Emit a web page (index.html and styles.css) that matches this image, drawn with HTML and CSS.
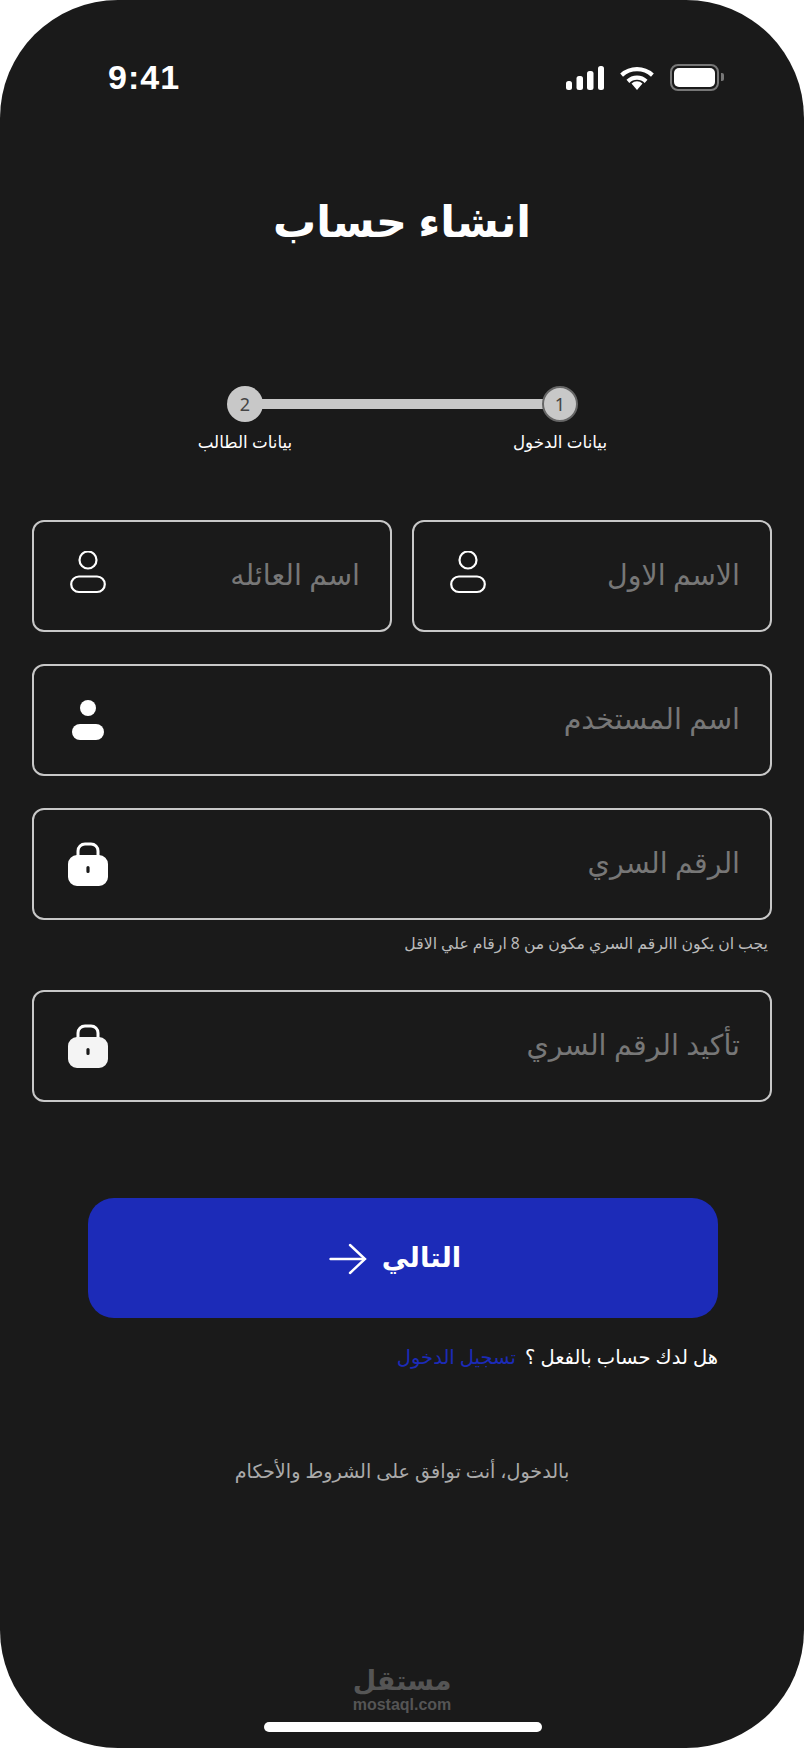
FILE: index.html
```html
<!DOCTYPE html>
<html lang="ar" dir="rtl">
<head>
  <meta charset="UTF-8" />
  <meta name="viewport" content="width=device-width, initial-scale=1.0"/>
  <title>انشاء حساب</title>
  <link rel="stylesheet" href="styles.css">
</head>
<body>
  <div class="phone">
    <div class="status-bar" dir="ltr">
      <span class="time">9:41</span>
      <div class="status-icons">
        <svg class="signal" width="38" height="24" viewBox="0 0 38 24"><rect x="0" y="15" width="6" height="9" rx="2.5"/><rect x="10.500" y="10" width="6.500" height="14" rx="2.500"/><rect x="21" y="5" width="6.500" height="19" rx="2.500"/><rect x="32" y="0" width="6" height="24" rx="2.500"/></svg>
        <svg class="wifi" width="34" height="24" viewBox="0 0 34 24"><path d="M17 24l-5.500-6.500a8 8 0 0 1 11 0z"/><path d="M17 9.500a15 15 0 0 1 10.500 4.300l-2.800 3.200a11 11 0 0 0-15.400 0l-2.800-3.200A15 15 0 0 1 17 9.500z"/><path d="M17 1a25 25 0 0 1 16.800 6.500l-2.800 3.200a21 21 0 0 0-28 0L.200 7.500A25 25 0 0 1 17 1z"/></svg>
        <div class="battery"><span class="battery-level"></span></div>
        <span class="battery-nub"></span>
      </div>
    </div>

    <h1 class="title">انشاء حساب</h1>

    <div class="stepper">
      <div class="step">
        <span class="step-num step-num-active">1</span>
        <span class="step-label">بيانات الدخول</span>
      </div>
      <div class="step-line"></div>
      <div class="step">
        <span class="step-num">2</span>
        <span class="step-label">بيانات الطالب</span>
      </div>
    </div>

    <form class="form">
      <div class="row-two">
        <label class="field">
          <span class="placeholder">الاسم الاول</span>
          <svg class="icon icon-outline" width="40" height="44" viewBox="0 0 40 44" fill="none" stroke="#fff" stroke-width="2.200"><circle cx="20" cy="9" r="8.500"/><rect x="3.200" y="25.500" width="33.600" height="15.500" rx="7.750"/></svg>
        </label>
        <label class="field">
          <span class="placeholder">اسم العائله</span>
          <svg class="icon icon-outline" width="40" height="44" viewBox="0 0 40 44" fill="none" stroke="#fff" stroke-width="2.200"><circle cx="20" cy="9" r="8.500"/><rect x="3.200" y="25.500" width="33.600" height="15.500" rx="7.750"/></svg>
        </label>
      </div>

      <label class="field">
        <span class="placeholder">اسم المستخدم</span>
        <svg class="icon" width="40" height="40" viewBox="0 0 40 40" fill="#fff"><circle cx="20" cy="8" r="8"/><rect x="4" y="24" width="32" height="16" rx="8"/></svg>
      </label>

      <div class="field-group">
        <label class="field">
          <span class="placeholder">الرقم السري</span>
          <svg class="icon" width="40" height="44" viewBox="0 0 40 44"><path d="M10 16V9a7 7 0 0 1 7-7h6a7 7 0 0 1 7 7v7" fill="none" stroke="#fff" stroke-width="3"/><path fill="#fff" fill-rule="evenodd" d="M9 13h22a9 9 0 0 1 9 9v13a9 9 0 0 1-9 9H9a9 9 0 0 1-9-9V22a9 9 0 0 1 9-9zm11 11a1.600 1.600 0 0 0-1.600 1.600v3.800a1.600 1.600 0 0 0 3.200 0v-3.800A1.600 1.600 0 0 0 20 24z"/></svg>
        </label>
        <p class="hint">يجب ان يكون االرقم السري مكون من 8 ارقام علي الاقل</p>
      </div>

      <label class="field">
        <span class="placeholder">تأكيد الرقم السري</span>
        <svg class="icon" width="40" height="44" viewBox="0 0 40 44"><path d="M10 16V9a7 7 0 0 1 7-7h6a7 7 0 0 1 7 7v7" fill="none" stroke="#fff" stroke-width="3"/><path fill="#f4f4f4" fill-rule="evenodd" d="M9 13h22a9 9 0 0 1 9 9v13a9 9 0 0 1-9 9H9a9 9 0 0 1-9-9V22a9 9 0 0 1 9-9zm11 11a1.600 1.600 0 0 0-1.600 1.600v3.800a1.600 1.600 0 0 0 3.200 0v-3.800A1.600 1.600 0 0 0 20 24z"/></svg>
      </label>
    </form>

    <button class="next-btn" type="button">
      <span class="next-label">التالي</span>
      <svg class="next-arrow" width="38" height="32" viewBox="0 0 38 32" fill="none" stroke="#fff" stroke-width="2.400" stroke-linecap="round"><path d="M1.500 16h34"/><path d="M21 2l15 14-15 14"/></svg>
    </button>

    <p class="login-line">هل لدك حساب بالفعل ؟ <a class="login-link" href="#">تسجيل الدخول</a></p>

    <p class="terms">بالدخول، أنت توافق على الشروط والأحكام</p>

    <div class="watermark">
      <span class="watermark-ar">مستقل</span>
      <span class="watermark-en">mostaql.com</span>
    </div>

    <div class="home-bar"></div>
  </div>
</body>
</html>
```

FILE: styles.css
```css
:root {
  --bg: #1a1a1a;
  --line: #c8c8c8;
  --blue: #1c2bb8;
}
* {
  box-sizing: border-box;
}
body {
  margin: 0;
  background: #fff;
  font-family: "Noto Sans", "DejaVu Sans", sans-serif;
  color: #fff;
}
.phone {
  width: 804px;
  height: 1748px;
  background: var(--bg);
  border-radius: 118px;
  padding-top: 58px;
  display: flex;
  flex-direction: column;
}
.status-bar {
  height: 38px;
  padding: 0 80px 0 108px;
  display: flex;
  justify-content: space-between;
  align-items: center;
}
.time {
  font-family: "Liberation Sans", sans-serif;
  font-size: 34px;
  font-weight: 700;
  letter-spacing: 1px;
}
.status-icons {
  display: flex;
  align-items: center;
  fill: #fff;
}
.signal {
  margin-right: 16px;
  margin-top: 1px;
}
.wifi {
  margin-right: 16px;
  margin-top: 1px;
}
.battery {
  width: 49px;
  height: 27px;
  border: 2px solid #777;
  border-radius: 8px;
  padding: 2px;
}
.battery-level {
  display: block;
  height: 100%;
  background: #fff;
  border-radius: 5px;
}
.battery-nub {
  width: 3px;
  height: 8px;
  margin-left: 2px;
  background: #777;
  border-radius: 0 2px 2px 0;
}
.title {
  margin: 97px 0 0;
  text-align: center;
  font-size: 43px;
  line-height: 56px;
  font-weight: 700;
}
.stepper {
  margin: 137px auto 0 198px;
  width: 409px;
  display: flex;
}
.step {
  width: 94px;
  display: flex;
  flex-direction: column;
  align-items: center;
  position: relative;
}
.step-num {
  width: 36px;
  height: 36px;
  border-radius: 50%;
  background: var(--line);
  color: #444;
  font-size: 18px;
  display: flex;
  align-items: center;
  justify-content: center;
}
.step-num-active {
  border: 2px solid #666;
}
.step-label {
  margin-top: 9px;
  font-size: 16.700px;
  line-height: 22px;
  white-space: nowrap;
}
.step-line {
  flex: 1;
  height: 10px;
  margin: 13px -30px 0;
  background: var(--line);
}
.form {
  margin: 67px 32px 0;
  display: flex;
  flex-direction: column;
  gap: 32px;
}
.row-two {
  display: grid;
  grid-template-columns: 1fr 1fr;
  gap: 20px;
}
.field {
  height: 112px;
  border: 2px solid var(--line);
  border-radius: 12px;
  padding: 0 30px 0 34px;
  display: flex;
  align-items: center;
  justify-content: space-between;
}
.placeholder {
  margin-bottom: 4px;
  font-size: 28.500px;
  color: #777;
  white-space: nowrap;
}
.icon {
  flex: none;
}
.icon-outline {
  margin-bottom: 6px;
}
.field-group {
  height: 150px;
}
.hint {
  margin: 11px 4px 0 0;
  font-size: 15.700px;
  line-height: 24px;
  color: #bbb;
}
.next-btn {
  margin: 96px 86px 0 88px;
  height: 120px;
  padding: 0 16px 0 0;
  border: 0;
  border-radius: 26px;
  background: var(--blue);
  color: #fff;
  font-family: inherit;
  font-size: 27.500px;
  font-weight: 700;
  display: flex;
  align-items: center;
  justify-content: center;
  gap: 15px;
}
.next-label {
  margin-bottom: 4px;
}
.next-arrow {
  margin-top: 2px;
}
.login-line {
  margin: 24px 86px 0 0;
  font-size: 19.500px;
  line-height: 30px;
}
.login-link {
  margin-right: 4px;
  color: var(--blue);
  text-decoration: none;
}
.terms {
  margin: 84px 0 0;
  text-align: center;
  font-size: 19.200px;
  line-height: 30px;
  color: #aaa;
}
.watermark {
  margin-top: auto;
  display: flex;
  flex-direction: column;
  align-items: center;
  color: #555;
  font-weight: 700;
}
.watermark-ar {
  font-size: 27px;
  line-height: 34px;
}
.watermark-en {
  font-family: "Liberation Sans", sans-serif;
  font-size: 16px;
  line-height: 16px;
}
.home-bar {
  width: 278px;
  height: 10px;
  margin: 9px auto 16px 264px;
  background: #fff;
  border-radius: 5px;
}
```
